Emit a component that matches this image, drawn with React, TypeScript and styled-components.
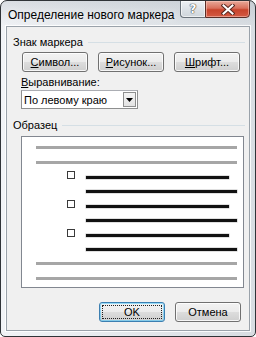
import styled, { createGlobalStyle } from "styled-components";

const GlobalStyle = createGlobalStyle`
  html, body {
    margin: 0;
    padding: 0;
    background: #ffffff;
  }
  body {
    font-family: "Liberation Sans", Arial, sans-serif;
  }
  * {
    box-sizing: border-box;
  }
`;

const App: React.FC = () => {
  return (
    <>
      <GlobalStyle />
      <Window>
        <TitleBar>
          <Title>Определение нового маркера</Title>
          <Caption>
            <HelpButton>?</HelpButton>
            <CloseButton>
              <svg width="14" height="11" viewBox="0 0 14 11">
                <path d="M2.5 1.5 L11.5 9.5 M11.5 1.5 L2.5 9.5" stroke="#5a2a22" strokeWidth="4" strokeLinecap="square" />
                <path d="M2.5 1.5 L11.5 9.5 M11.5 1.5 L2.5 9.5" stroke="#ffffff" strokeWidth="2" strokeLinecap="square" />
              </svg>
            </CloseButton>
          </Caption>
        </TitleBar>
        <Client>
          <GroupHeader>Знак маркера</GroupHeader>
          <ButtonRow>
            <Button>
              <u>С</u>имвол...
            </Button>
            <Button>
              <u>Р</u>исунок...
            </Button>
            <Button>
              <u>Ш</u>рифт...
            </Button>
          </ButtonRow>
          <Label>
            <u>В</u>ыравнивание:
          </Label>
          <Select>
            <SelectValue>По левому краю</SelectValue>
            <SelectArrow>
              <svg width="7" height="4" viewBox="0 0 7 4">
                <path d="M0 0 H7 L3.5 4 Z" fill="#000" />
              </svg>
            </SelectArrow>
          </Select>
          <GroupHeader $top={10}>Образец</GroupHeader>
          <Preview>
            <GreyLine />
            <GreyLine $top={12} />
            {[0, 1, 2].map((i) => (
              <Item key={i}>
                <ItemRow>
                  <Marker />
                  <FirstLine />
                </ItemRow>
                <NextLine />
              </Item>
            ))}
            <GreyLine $top={11} />
            <GreyLine $top={12} />
          </Preview>
          <Footer>
            <Button $default>OK</Button>
            <Button>Отмена</Button>
          </Footer>
        </Client>
      </Window>
    </>
  );
};

export default App;

const Window = styled.div`
  width: 256px;
  height: 337px;
  display: flex;
  flex-direction: column;
  padding: 0 5px 5px 5px;
  border: 1px solid #2f3337;
  border-radius: 7px 7px 5px 5px;
  background: linear-gradient(
      180deg,
      rgba(150, 160, 170, 0.25) 0px,
      rgba(255, 255, 255, 0) 26px
    ),
    linear-gradient(90deg, #f1f3f6 0%, #e4e8ec 50%, #d8dde2 100%);
  overflow: hidden;
`;

const TitleBar = styled.div`
  height: 25px;
  display: flex;
  justify-content: space-between;
  align-items: flex-start;
`;

const Title = styled.div`
  padding: 7px 0 0 2px;
  font-size: 12px;
  color: #000;
  text-shadow: 0 0 6px rgba(255, 255, 255, 0.9);
`;

const Caption = styled.div`
  display: flex;
  margin-top: -1px;
`;

const HelpButton = styled.div`
  width: 25px;
  height: 18px;
  display: flex;
  align-items: center;
  justify-content: center;
  border: 1px solid #6b737b;
  border-right: none;
  border-radius: 0 0 0 4px;
  background: linear-gradient(180deg, #eef1f4 0%, #dde2e7 50%, #cfd5db 100%);
  box-shadow: inset 0 0 0 1px rgba(255, 255, 255, 0.6);
  font-family: "DejaVu Sans", sans-serif;
  font-weight: bold;
  font-size: 12px;
  color: #ffffff;
  text-shadow: 0 0 1px #444, 0 0 1px #444, 0 0 1px #444;
`;

const CloseButton = styled.div`
  width: 45px;
  height: 18px;
  display: flex;
  align-items: center;
  justify-content: center;
  border: 1px solid #5a2d26;
  border-radius: 0 0 4px 0;
  background: linear-gradient(180deg, #e8a999 0%, #d9705c 45%, #c8432b 55%, #d35a43 100%);
  box-shadow: inset 0 0 0 1px rgba(255, 210, 200, 0.5);
`;

const Client = styled.div`
  flex: 1;
  display: flex;
  flex-direction: column;
  background: #f0f0f0;
  border: 1px solid #9aa2aa;
  box-shadow: 0 0 0 1px rgba(255, 255, 255, 0.85);
  font-size: 11px;
  color: #000;
`;

const GroupHeader = styled.div<{ $top?: number }>`
  margin: ${({ $top }) => $top ?? 9}px 4px 0 6px;
  height: 13px;
  line-height: 13px;
  display: flex;
  align-items: center;
  gap: 5px;
  &::after {
    content: "";
    flex: 1;
    height: 1px;
    background: #d5dfe5;
  }
`;

const ButtonRow = styled.div`
  margin: 3px 0 0 15px;
  display: flex;
  gap: 10px;
`;

const Button = styled.div<{ $default?: boolean }>`
  position: relative;
  width: 66px;
  height: 20px;
  display: flex;
  align-items: center;
  justify-content: center;
  border: 1px solid ${({ $default }) => ($default ? "#3c7fb1" : "#707070")};
  border-radius: 3px;
  background: linear-gradient(180deg, #f2f2f2 0%, #ebebeb 50%, #dddddd 50%, #cfcfcf 100%);
  box-shadow: inset 0 0 0 1px
    ${({ $default }) => ($default ? "rgba(72, 200, 255, 0.55)" : "rgba(255, 255, 255, 0.8)")};
  font-size: 11px;
  color: #000;
  u {
    text-decoration: underline;
  }
  &::after {
    content: "";
    display: ${({ $default }) => ($default ? "block" : "none")};
    position: absolute;
    inset: 2px;
    border: 1px dotted #222;
  }
`;

const Label = styled.div`
  margin: 4px 0 0 14px;
  height: 13px;
  line-height: 13px;
`;

const Select = styled.div`
  margin: 1px 0 0 14px;
  width: 117px;
  height: 19px;
  display: flex;
  align-items: stretch;
  background: #ffffff;
  border: 1px solid #8e8f8f;
  border-top-color: #abadb3;
`;

const SelectValue = styled.div`
  flex: 1;
  display: flex;
  align-items: center;
  padding-left: 2px;
`;

const SelectArrow = styled.div`
  width: 13px;
  margin: 1px;
  display: flex;
  align-items: center;
  justify-content: center;
  border: 1px solid #8e8f8f;
  background: linear-gradient(180deg, #f4f4f4 0%, #e3e3e3 100%);
`;

const Preview = styled.div`
  margin: 4px 0 0 14px;
  width: 223px;
  height: 152px;
  display: flex;
  flex-direction: column;
  padding: 9px 6px 0 14px;
  background: #ffffff;
  border: 1px solid #828790;
`;

const GreyLine = styled.div<{ $top?: number }>`
  flex: none;
  margin-top: ${({ $top }) => $top ?? 0}px;
  height: 3px;
  background: #a6a6a6;
`;

const Item = styled.div`
  flex: none;
  margin-top: 7px;
`;

const ItemRow = styled.div`
  display: flex;
  align-items: flex-start;
  height: 8px;
`;

const Marker = styled.div`
  margin-left: 31px;
  width: 8px;
  height: 8px;
  border: 1px solid #3a3a3a;
  background: #ffffff;
`;

const FirstLine = styled.div`
  flex: 1;
  margin: 5px 8px 0 11px;
  height: 3px;
  background: #111111;
  box-shadow: 0 0 0 0.5px rgba(0, 0, 0, 0.25);
`;

const NextLine = styled.div`
  margin: 11px 0 0 50px;
  height: 3px;
  background: #111111;
  box-shadow: 0 0 0 0.5px rgba(0, 0, 0, 0.25);
`;

const Footer = styled.div`
  margin: 14px 8px 0 0;
  display: flex;
  justify-content: flex-end;
  gap: 10px;
`;
